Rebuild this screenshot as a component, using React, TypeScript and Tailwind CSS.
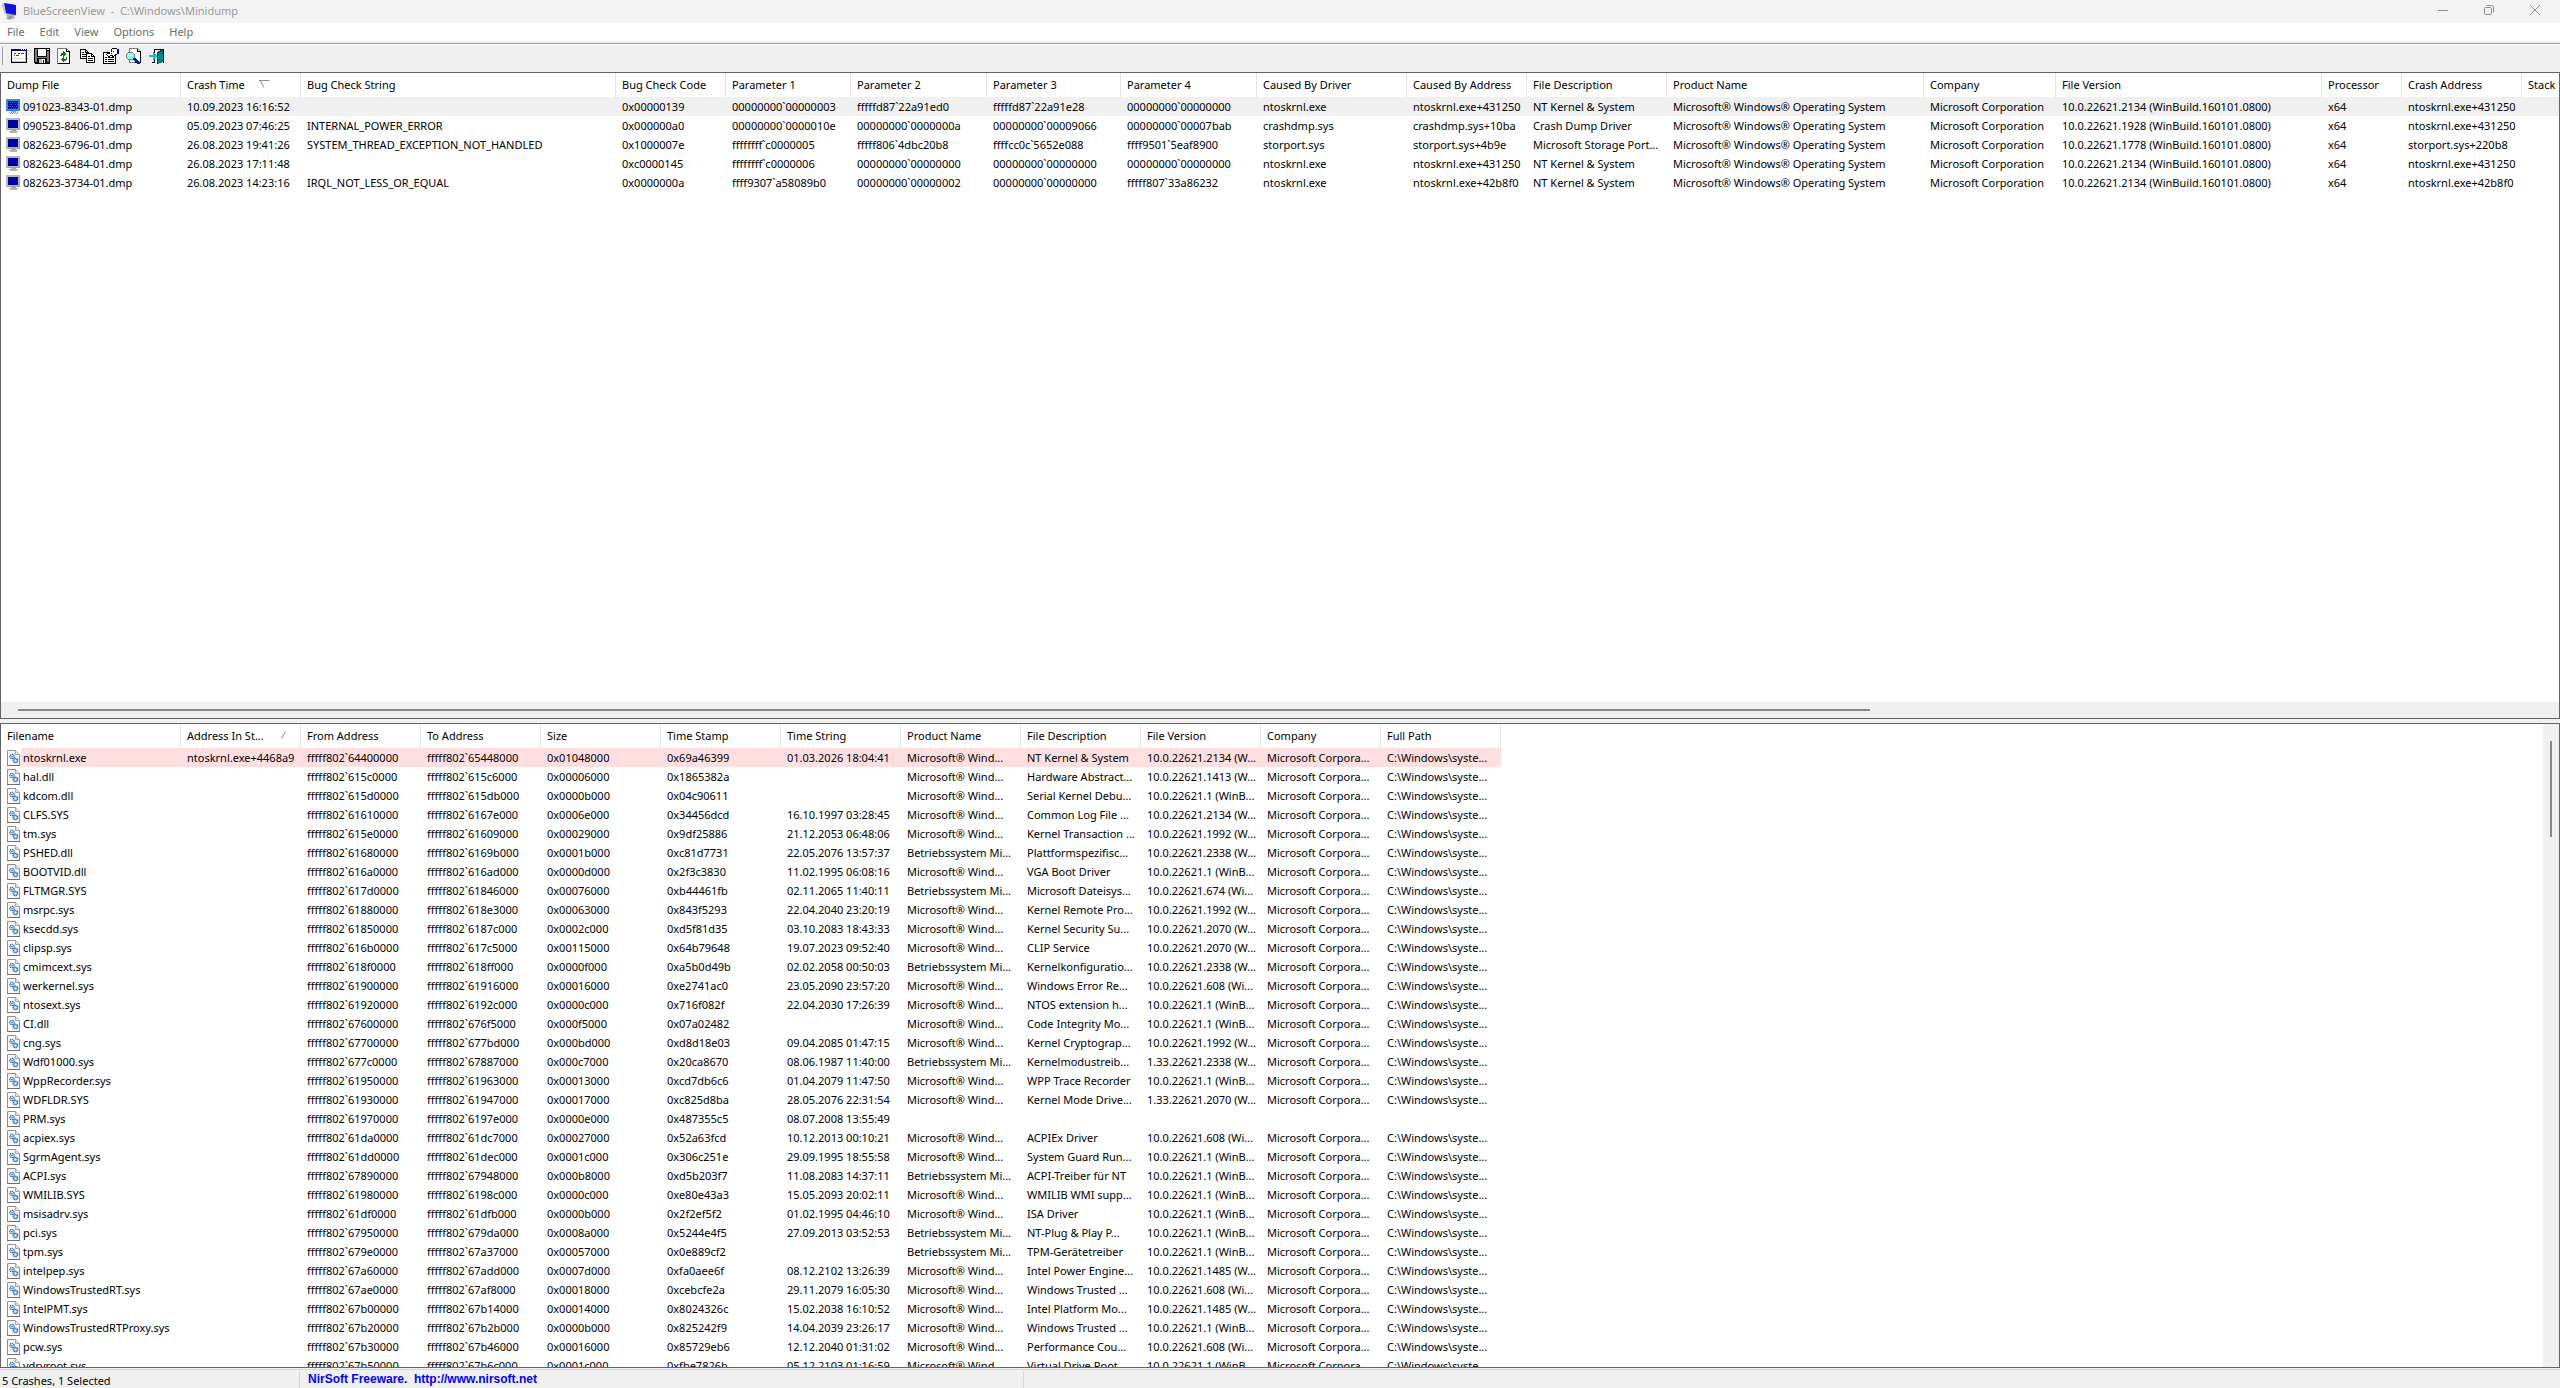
import React from 'react';
import clsx from 'clsx';

interface Column {
  title: string;
  width: string;
  sort?: 'asc' | 'desc';
}

interface ReportTableProps {
  columns: Column[];
  rows: string[][];
  icon: (selected: boolean) => React.ReactNode;
  highlight: string;
  className?: string;
}

const crashColumns: Column[] = [
  { title: 'Dump File', width: 'w-[180px]' },
  { title: 'Crash Time', width: 'w-[120px]', sort: 'desc' },
  { title: 'Bug Check String', width: 'w-[315px]' },
  { title: 'Bug Check Code', width: 'w-[110px]' },
  { title: 'Parameter 1', width: 'w-[125px]' },
  { title: 'Parameter 2', width: 'w-[136px]' },
  { title: 'Parameter 3', width: 'w-[134px]' },
  { title: 'Parameter 4', width: 'w-[136px]' },
  { title: 'Caused By Driver', width: 'w-[150px]' },
  { title: 'Caused By Address', width: 'w-[120px]' },
  { title: 'File Description', width: 'w-[140px]' },
  { title: 'Product Name', width: 'w-[257px]' },
  { title: 'Company', width: 'w-[132px]' },
  { title: 'File Version', width: 'w-[266px]' },
  { title: 'Processor', width: 'w-[80px]' },
  { title: 'Crash Address', width: 'w-[120px]' },
  { title: 'Stack', width: 'w-[120px]' },
];

const WIN_OS = 'Microsoft® Windows® Operating System';
const MS_CORP = 'Microsoft Corporation';

const crashes: string[][] = [
  ['091023-8343-01.dmp', '10.09.2023 16:16:52', '', '0x00000139', '00000000`00000003', 'fffffd87`22a91ed0', 'fffffd87`22a91e28', '00000000`00000000', 'ntoskrnl.exe', 'ntoskrnl.exe+431250', 'NT Kernel & System', WIN_OS, MS_CORP, '10.0.22621.2134 (WinBuild.160101.0800)', 'x64', 'ntoskrnl.exe+431250', ''],
  ['090523-8406-01.dmp', '05.09.2023 07:46:25', 'INTERNAL_POWER_ERROR', '0x000000a0', '00000000`0000010e', '00000000`0000000a', '00000000`00009066', '00000000`00007bab', 'crashdmp.sys', 'crashdmp.sys+10ba', 'Crash Dump Driver', WIN_OS, MS_CORP, '10.0.22621.1928 (WinBuild.160101.0800)', 'x64', 'ntoskrnl.exe+431250', ''],
  ['082623-6796-01.dmp', '26.08.2023 19:41:26', 'SYSTEM_THREAD_EXCEPTION_NOT_HANDLED', '0x1000007e', 'ffffffff`c0000005', 'fffff806`4dbc20b8', 'ffffcc0c`5652e088', 'ffff9501`5eaf8900', 'storport.sys', 'storport.sys+4b9e', 'Microsoft Storage Port...', WIN_OS, MS_CORP, '10.0.22621.1778 (WinBuild.160101.0800)', 'x64', 'storport.sys+220b8', ''],
  ['082623-6484-01.dmp', '26.08.2023 17:11:48', '', '0xc0000145', 'ffffffff`c0000006', '00000000`00000000', '00000000`00000000', '00000000`00000000', 'ntoskrnl.exe', 'ntoskrnl.exe+431250', 'NT Kernel & System', WIN_OS, MS_CORP, '10.0.22621.2134 (WinBuild.160101.0800)', 'x64', 'ntoskrnl.exe+431250', ''],
  ['082623-3734-01.dmp', '26.08.2023 14:23:16', 'IRQL_NOT_LESS_OR_EQUAL', '0x0000000a', 'ffff9307`a58089b0', '00000000`00000002', '00000000`00000000', 'fffff807`33a86232', 'ntoskrnl.exe', 'ntoskrnl.exe+42b8f0', 'NT Kernel & System', WIN_OS, MS_CORP, '10.0.22621.2134 (WinBuild.160101.0800)', 'x64', 'ntoskrnl.exe+42b8f0', ''],
];

const driverColumns: Column[] = [
  { title: 'Filename', width: 'w-[180px]' },
  { title: 'Address In St...', width: 'w-[120px]', sort: 'asc' },
  { title: 'From Address', width: 'w-[120px]' },
  { title: 'To Address', width: 'w-[120px]' },
  { title: 'Size', width: 'w-[120px]' },
  { title: 'Time Stamp', width: 'w-[120px]' },
  { title: 'Time String', width: 'w-[120px]' },
  { title: 'Product Name', width: 'w-[120px]' },
  { title: 'File Description', width: 'w-[120px]' },
  { title: 'File Version', width: 'w-[120px]' },
  { title: 'Company', width: 'w-[120px]' },
  { title: 'Full Path', width: 'w-[120px]' },
];

const MS = 'Microsoft® Wind...';
const BS = 'Betriebssystem Mi...';

// name, from, to, size, time stamp, time string, product, description, version
const drivers: string[][] = [
  ['ntoskrnl.exe', '64400000', '65448000', '0x01048000', '0x69a46399', '01.03.2026 18:04:41', MS, 'NT Kernel & System', '10.0.22621.2134 (W...'],
  ['hal.dll', '615c0000', '615c6000', '0x00006000', '0x1865382a', '', MS, 'Hardware Abstract...', '10.0.22621.1413 (W...'],
  ['kdcom.dll', '615d0000', '615db000', '0x0000b000', '0x04c90611', '', MS, 'Serial Kernel Debu...', '10.0.22621.1 (WinB...'],
  ['CLFS.SYS', '61610000', '6167e000', '0x0006e000', '0x34456dcd', '16.10.1997 03:28:45', MS, 'Common Log File ...', '10.0.22621.2134 (W...'],
  ['tm.sys', '615e0000', '61609000', '0x00029000', '0x9df25886', '21.12.2053 06:48:06', MS, 'Kernel Transaction ...', '10.0.22621.1992 (W...'],
  ['PSHED.dll', '61680000', '6169b000', '0x0001b000', '0xc81d7731', '22.05.2076 13:57:37', BS, 'Plattformspezifisc...', '10.0.22621.2338 (W...'],
  ['BOOTVID.dll', '616a0000', '616ad000', '0x0000d000', '0x2f3c3830', '11.02.1995 06:08:16', MS, 'VGA Boot Driver', '10.0.22621.1 (WinB...'],
  ['FLTMGR.SYS', '617d0000', '61846000', '0x00076000', '0xb44461fb', '02.11.2065 11:40:11', BS, 'Microsoft Dateisys...', '10.0.22621.674 (Wi...'],
  ['msrpc.sys', '61880000', '618e3000', '0x00063000', '0x843f5293', '22.04.2040 23:20:19', MS, 'Kernel Remote Pro...', '10.0.22621.1992 (W...'],
  ['ksecdd.sys', '61850000', '6187c000', '0x0002c000', '0xd5f81d35', '03.10.2083 18:43:33', MS, 'Kernel Security Su...', '10.0.22621.2070 (W...'],
  ['clipsp.sys', '616b0000', '617c5000', '0x00115000', '0x64b79648', '19.07.2023 09:52:40', MS, 'CLIP Service', '10.0.22621.2070 (W...'],
  ['cmimcext.sys', '618f0000', '618ff000', '0x0000f000', '0xa5b0d49b', '02.02.2058 00:50:03', BS, 'Kernelkonfiguratio...', '10.0.22621.2338 (W...'],
  ['werkernel.sys', '61900000', '61916000', '0x00016000', '0xe2741ac0', '23.05.2090 23:57:20', MS, 'Windows Error Re...', '10.0.22621.608 (Wi...'],
  ['ntosext.sys', '61920000', '6192c000', '0x0000c000', '0x716f082f', '22.04.2030 17:26:39', MS, 'NTOS extension h...', '10.0.22621.1 (WinB...'],
  ['CI.dll', '67600000', '676f5000', '0x000f5000', '0x07a02482', '', MS, 'Code Integrity Mo...', '10.0.22621.1 (WinB...'],
  ['cng.sys', '67700000', '677bd000', '0x000bd000', '0xd8d18e03', '09.04.2085 01:47:15', MS, 'Kernel Cryptograp...', '10.0.22621.1992 (W...'],
  ['Wdf01000.sys', '677c0000', '67887000', '0x000c7000', '0x20ca8670', '08.06.1987 11:40:00', BS, 'Kernelmodustreib...', '1.33.22621.2338 (W...'],
  ['WppRecorder.sys', '61950000', '61963000', '0x00013000', '0xcd7db6c6', '01.04.2079 11:47:50', MS, 'WPP Trace Recorder', '10.0.22621.1 (WinB...'],
  ['WDFLDR.SYS', '61930000', '61947000', '0x00017000', '0xc825d8ba', '28.05.2076 22:31:54', MS, 'Kernel Mode Drive...', '1.33.22621.2070 (W...'],
  ['PRM.sys', '61970000', '6197e000', '0x0000e000', '0x487355c5', '08.07.2008 13:55:49', '', '', ''],
  ['acpiex.sys', '61da0000', '61dc7000', '0x00027000', '0x52a63fcd', '10.12.2013 00:10:21', MS, 'ACPIEx Driver', '10.0.22621.608 (Wi...'],
  ['SgrmAgent.sys', '61dd0000', '61dec000', '0x0001c000', '0x306c251e', '29.09.1995 18:55:58', MS, 'System Guard Run...', '10.0.22621.1 (WinB...'],
  ['ACPI.sys', '67890000', '67948000', '0x000b8000', '0xd5b203f7', '11.08.2083 14:37:11', BS, 'ACPI-Treiber für NT', '10.0.22621.1 (WinB...'],
  ['WMILIB.SYS', '61980000', '6198c000', '0x0000c000', '0xe80e43a3', '15.05.2093 20:02:11', MS, 'WMILIB WMI supp...', '10.0.22621.1 (WinB...'],
  ['msisadrv.sys', '61df0000', '61dfb000', '0x0000b000', '0x2f2ef5f2', '01.02.1995 04:46:10', MS, 'ISA Driver', '10.0.22621.1 (WinB...'],
  ['pci.sys', '67950000', '679da000', '0x0008a000', '0x5244e4f5', '27.09.2013 03:52:53', BS, 'NT-Plug & Play P...', '10.0.22621.1 (WinB...'],
  ['tpm.sys', '679e0000', '67a37000', '0x00057000', '0x0e889cf2', '', BS, 'TPM-Gerätetreiber', '10.0.22621.1 (WinB...'],
  ['intelpep.sys', '67a60000', '67add000', '0x0007d000', '0xfa0aee6f', '08.12.2102 13:26:39', MS, 'Intel Power Engine...', '10.0.22621.1485 (W...'],
  ['WindowsTrustedRT.sys', '67ae0000', '67af8000', '0x00018000', '0xcebcfe2a', '29.11.2079 16:05:30', MS, 'Windows Trusted ...', '10.0.22621.608 (Wi...'],
  ['IntelPMT.sys', '67b00000', '67b14000', '0x00014000', '0x8024326c', '15.02.2038 16:10:52', MS, 'Intel Platform Mo...', '10.0.22621.1485 (W...'],
  ['WindowsTrustedRTProxy.sys', '67b20000', '67b2b000', '0x0000b000', '0x825242f9', '14.04.2039 23:26:17', MS, 'Windows Trusted ...', '10.0.22621.1 (WinB...'],
  ['pcw.sys', '67b30000', '67b46000', '0x00016000', '0x85729eb6', '12.12.2040 01:31:02', MS, 'Performance Cou...', '10.0.22621.608 (Wi...'],
  ['vdrvroot.sys', '67b50000', '67b6c000', '0x0001c000', '0xfbe7826b', '05.12.2103 01:16:59', MS, 'Virtual Drive Root ...', '10.0.22621.1 (WinB...'],
];

const driverRows = drivers.map(([name, from, to, size, stamp, time, product, description, version], i) => [
  name,
  i === 0 ? 'ntoskrnl.exe+4468a9' : '',
  `fffff802\`${from}`,
  `fffff802\`${to}`,
  size,
  stamp,
  time,
  product,
  description,
  version,
  product && 'Microsoft Corpora...',
  product && 'C:\\Windows\\syste...',
]);

const AppIcon = () => (
  <svg width="16" height="17" viewBox="0 0 16 17">
    <path d="M4 12l6-1 1 2 2 1v1l-5 2-4-1 1-2z" fill="#b4b4b4" />
    <path d="M6 14l4-1 1 1-4 2z" fill="#8a8a8a" />
    <path d="M0 2l2-2 11 2 1 9-1 2-10-2z" fill="#9b9ba3" />
    <path d="M2 0l12 2 0 10L4 10z" fill="#1212e6" />
    <path d="M2 0L0 2l3 9 1 0z" fill="#c4c4cc" />
  </svg>
);

const MonitorIcon = ({ selected }: { selected: boolean }) => (
  <svg width="14" height="15" viewBox="0 0 14 15" shapeRendering="crispEdges">
    <rect x="0" y="0" width="14" height="12" fill={selected ? '#3c8fdc' : '#b9b9b4'} />
    <path d="M1 11.500h12.500V1" fill="none" stroke={selected ? '#2f74c4' : '#a0a09c'} />
    <rect x="2" y="2" width="10" height="8" fill="#0000a4" />
    {selected && (
      <path d="M2 3.500h10M3 5.500h9M2 7.500h10M3 9.500h9" stroke="#1c5fd0" strokeDasharray="1 1" />
    )}
    <path d="M5 12.500h5" stroke={selected ? '#7fb0dc' : '#a8a8a8'} />
    <path d="M3 13.500h9M4 14.500h7" stroke={selected ? '#4d94d8' : '#b4b4b4'} strokeDasharray={selected ? '1 1' : undefined} />
  </svg>
);

const DriverIcon = () => (
  <svg width="13" height="16" viewBox="0 0 13 16">
    <path d="M.5.500h8l4 4v11H.5z" fill="#fbfbfb" stroke="#8f8f8f" />
    <path d="M8.500.500v4h4" fill="#e6e6e6" stroke="#a5a5a5" />
    <path d="M0 15.500h13" stroke="#6e6e6e" />
    <circle cx="5" cy="6.500" r="2.200" fill="#dcebf8" stroke="#2a62a0" strokeWidth="1.300" strokeDasharray="1.200 .6" />
    <circle cx="8.500" cy="10.500" r="2.200" fill="#a9cbea" stroke="#2f6db0" strokeWidth="1.400" strokeDasharray="1.300 .5" />
    <circle cx="8.500" cy="10.500" r=".8" fill="#fff" />
    <circle cx="5" cy="6.500" r=".7" fill="#2a62a0" />
  </svg>
);

const SortMark = ({ dir }: { dir: 'asc' | 'desc' }) =>
  dir === 'desc' ? (
    <svg width="11" height="8" viewBox="0 0 11 8" fill="none">
      <path d="M0 .500h10.500M1.500 1l3.500 6.500" stroke="#8e8e8e" />
    </svg>
  ) : (
    <svg width="11" height="8" viewBox="0 0 11 8" fill="none">
      <path d="M3.500 7.500L7.500 .500" stroke="#8e8e8e" />
    </svg>
  );

const toolbarItems: { label: string; icon: React.ReactNode }[] = [
  {
    label: 'Advanced Options',
    icon: (
      <>
        <path d="M0 1h16v14H0z" fill="#fff" />
        <path d="M0 1h16v2H0z" fill="#00007b" />
        <path d="M10 1h1v1h-1zM12 1h1v1h-1zM14 1h1v1h-1z" fill="#fff" />
        <path d="M0 3h1v12H0zM0 14h16v1H0zM15 3h1v12h-1z" fill="#000" />
        <path d="M1 13h14v1H1zM14 3h1v11h-1z" fill="#bdbdbd" />
        <path d="M3 5h2v1H3zM7 5h2v1H7zM10 5h3v1h-3zM3 7h1v1H3zM5 7h3v1H5z" fill="#404040" />
        <path d="M2 10h10v1H2z" fill="#d6d6d6" />
      </>
    ),
  },
  {
    label: 'Save Selected Items',
    icon: (
      <>
        <path d="M0 0h16v16H1l-1-1z" fill="#000" />
        <path d="M1 1h2v13H1zM13 3h2v11h-2z" fill="#7b7b7b" />
        <path d="M4 1h8v7H4z" fill="#fff" />
        <path d="M13 1h2v1h-2z" fill="#fff" />
        <path d="M3 9h10v1H3z" fill="#7b7b7b" />
        <path d="M5 11h6v4H5z" fill="#bdbdbd" />
        <path d="M8 11h3v4H8z" fill="#fff" />
        <path d="M9 12h1v3H9z" fill="#000" />
      </>
    ),
  },
  {
    label: 'Refresh',
    icon: (
      <>
        <path d="M.5.500h9l3 3v12H.5z" fill="#fff" stroke="#7b7b7b" />
        <path d="M12.500 4v11.500H.5M9.500.500v3h3" fill="none" stroke="#000" />
        <path d="M3 7h1V5h2V3l3 3-3 3V7H5v1H3zM10 9H9v2H7V8l-3 3 3 4v-2h2v-1h1z" fill="#008400" />
      </>
    ),
  },
  {
    label: 'Copy',
    icon: (
      <>
        <path d="M.5 1.500h5l3 3v6H.5z" fill="#fff" stroke="#000" />
        <path d="M5.500 1.500v3h3M2 4.500h2M2 6.500h4M2 8.500h4" fill="none" stroke="#000" />
        <path d="M6.500 5.500h5l3 3v6h-8z" fill="#fff" stroke="#000" />
        <path d="M11.500 5.500v3h3M8 8.500h2M8 10.500h5M8 12.500h5" fill="none" stroke="#000" />
      </>
    ),
  },
  {
    label: 'Properties',
    icon: (
      <>
        <path d="M.5 4.500h12v11H.5z" fill="#fff" stroke="#000" />
        <path d="M2 9.500h2M5 9.500h6M2 11.500h2M5 11.500h6M2 13.500h2M5 13.500h6" stroke="#000" />
        <path d="M3.500 6.500l4-3 2-3h4l2 2v3l-3 1-2 2-2-1-3 1z" fill="#fff" stroke="#000" />
        <path d="M6 5.500h4M8 3.500h3M7 7.500h2" stroke="#000" strokeDasharray="1 1" />
        <path d="M14 1h2v5h-2z" fill="#00007b" />
      </>
    ),
  },
  {
    label: 'Find',
    icon: (
      <>
        <path d="M3.500.500h8l3 3v11h-11z" fill="#fff" stroke="#7b7b7b" />
        <path d="M11.500.500v3h3v11H9" fill="none" stroke="#000" />
        <path d="M2.500 4.500h4l2 2v3l-2 2h-4l-2-2v-3z" fill="#8ff" stroke="#7b7b7b" />
        <path d="M2 7.500h5M3 9.500h3" stroke="#fff" strokeDasharray="1 1" />
        <path d="M7 10h2l5 4v2h-2l-5-4z" fill="#0018c8" />
      </>
    ),
  },
  {
    label: 'Exit',
    icon: (
      <>
        <path d="M5 1h10v14H5z" fill="#fff" />
        <path d="M5.500 6V1.500h9V15M5.500 10v4.500M3 14.500h3" fill="none" stroke="#000" />
        <path d="M8 4l6-3v13l-6 2z" fill="#008484" />
        <path d="M8 4l6-3v2L9 5v11H8z" fill="#004a4a" />
        <path d="M0 7h4V4l4 4-4 4V9H0z" fill="#00c6de" />
      </>
    ),
  },
];

const ReportTable: React.FC<ReportTableProps> = ({ columns, rows, icon, highlight, className }) => (
  <table className={clsx('table-fixed border-collapse whitespace-nowrap text-left leading-[19px]', className)}>
    <thead>
      <tr className="h-6">
        {columns.map(col => (
          <th key={col.title} className={clsx('p-0 font-normal', col.width)}>
            <div className="flex h-6 items-center border-r border-[#e5e5e5] pb-[2px] pl-[6px]">
              {col.title}
              {col.sort && <span className="ml-[14px]"><SortMark dir={col.sort} /></span>}
            </div>
          </th>
        ))}
      </tr>
    </thead>
    <tbody>
      {rows.map(([name, ...cells], i) => (
        <tr key={name} className="h-[19px]">
          <td className="p-0">
            <div className="flex h-[19px] items-center">
              <span className="flex w-5 shrink-0 justify-end pr-px">{icon(i === 0)}</span>
              <span className={clsx('grow pl-[2px]', i === 0 && highlight)}>{name}</span>
            </div>
          </td>
          {cells.map((cell, j) => (
            <td key={j} className={clsx('p-0 pl-[6px]', i === 0 && highlight)}>{cell}</td>
          ))}
        </tr>
      ))}
    </tbody>
  </table>
);

export default function App() {
  return (
    <div className="flex h-screen flex-col overflow-hidden bg-[#f0f0f0] font-['Noto_Sans',sans-serif] text-[11px] text-black">
      <header className="flex h-[23px] shrink-0 items-center bg-[#f3f3f3] pl-[2px] text-[#999999]">
        <AppIcon />
        <h1 className="ml-[5px] grow whitespace-pre">{'BlueScreenView  -  C:\\Windows\\Minidump'}</h1>
        <div className="flex pb-[3px] pr-[2px]">
          <button aria-label="Minimize" className="flex w-[46px] justify-center">
            <svg width="10" height="10" viewBox="0 0 10 10"><path d="M0 5.500h10" stroke="#8f8f8f" /></svg>
          </button>
          <button aria-label="Restore" className="flex w-[46px] justify-center">
            <svg width="10" height="10" viewBox="0 0 10 10" fill="none" stroke="#8f8f8f">
              <rect x=".5" y="2.500" width="7" height="7" rx="1" />
              <path d="M2.500.500h5a2 2 0 0 1 2 2v5" />
            </svg>
          </button>
          <button aria-label="Close" className="flex w-[46px] justify-center">
            <svg width="10" height="10" viewBox="0 0 10 10"><path d="M0 0l10 10M10 0L0 10" stroke="#8f8f8f" /></svg>
          </button>
        </div>
      </header>

      <nav className="flex h-[18px] shrink-0 items-center gap-[15px] bg-white pl-[7px] pt-px text-[#6d6d6d]">
        <button>File</button>
        <button>Edit</button>
        <button>View</button>
        <button>Options</button>
        <button>Help</button>
      </nav>

      <div className="mt-[2px] flex h-[29px] shrink-0 items-start border-t border-[#a0a0a0] shadow-[inset_0_1px_0_#ffffff]">
        <div className="ml-[2px] mt-[3px] h-[18px] w-px bg-[#a0a0a0]" />
        <div className="ml-2 mt-1 flex gap-[7px]">
          {toolbarItems.map(item => (
            <button key={item.label} aria-label={item.label}>
              <svg width="16" height="16" viewBox="0 0 16 16" shapeRendering="crispEdges">{item.icon}</svg>
            </button>
          ))}
        </div>
      </div>

      <section className="flex min-h-0 flex-[647_1_0%] flex-col border border-[#646464] bg-white">
        <div className="min-h-0 flex-1 overflow-hidden">
          <ReportTable
            columns={crashColumns}
            rows={crashes}
            icon={selected => <MonitorIcon selected={selected} />}
            highlight="bg-[#f0f0f0]"
            className="w-[2641px]"
          />
        </div>
        <div className="flex h-4 shrink-0 items-center bg-[#f0f0f0] pl-[17px] pr-1">
          <div className="h-[2px] w-[73%] bg-[#868686]" />
        </div>
      </section>

      <section className="mt-1 flex min-h-0 flex-[645_1_0%] border border-[#646464] bg-white">
        <div className="min-w-0 flex-1 overflow-hidden">
          <ReportTable
            columns={driverColumns}
            rows={driverRows}
            icon={() => <DriverIcon />}
            highlight="bg-[#ffdfdf]"
            className="w-[1500px]"
          />
        </div>
        <div className="flex w-4 shrink-0 justify-center bg-[#f0f0f0] pt-[17px]">
          <div className="h-24 w-[2px] bg-[#868686]" />
        </div>
      </section>

      <footer className="flex h-5 shrink-0 pt-px">
        <div className="flex grow border-t border-[#d7d7d7] pt-px">
          <div className="w-[299px] pl-[2px] pt-px leading-[18px]">5 Crashes, 1 Selected</div>
          <div className="w-[725px] border-x border-[#d7d7d7] pl-2">
            <a href="http://www.nirsoft.net" className="whitespace-pre font-['Liberation_Sans',sans-serif] text-xs font-bold text-[#0000ff]">
              {'NirSoft Freeware.  http://www.nirsoft.net'}
            </a>
          </div>
        </div>
      </footer>
    </div>
  );
}
